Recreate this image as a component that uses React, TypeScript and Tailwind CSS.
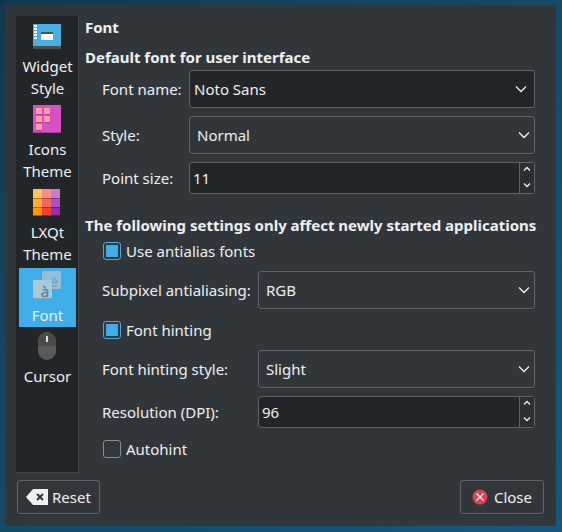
import { useState } from "react";
import type { ReactNode } from "react";

function WidgetIcon() {
  return (
    <svg className="h-8 w-[33px]" viewBox="0 0 33 32" shapeRendering="crispEdges" aria-hidden="true">
      <rect x="2" y="4" width="28" height="25" fill="#4d4d4d" />
      <rect x="2" y="4" width="28" height="22" fill="#47afe4" />
      {[5, 8, 11, 14, 17].map((y) => (
        <rect key={y} x="3" y={y} width="3" height="2" fill="#fff" />
      ))}
      <rect x="10" y="12" width="12" height="8" fill="#fff" />
      <rect x="10" y="12" width="12" height="2" fill="#4d4d4d" />
    </svg>
  );
}

function IconsIcon() {
  const cells = [[5, 5], [13, 5], [5, 13], [13, 13], [5, 21]];
  return (
    <svg className="h-8 w-[33px]" viewBox="0 0 33 32" shapeRendering="crispEdges" aria-hidden="true">
      <rect x="2" y="2" width="28" height="28" fill="#d94fc6" />
      <rect x="2" y="29" width="28" height="1" fill="#a53a96" />
      {cells.map(([x, y]) => (
        <g key={`${x}-${y}`}>
          <rect x={x} y={y + 6} width="6" height="1" fill="#a63c98" />
          <rect x={x} y={y} width="6" height="6" fill="#ff9ea2" />
        </g>
      ))}
    </svg>
  );
}

function LxqtIcon() {
  const rows = [
    ["#ffc168", "#fa8e86", "#c57bd0"],
    ["#ffac35", "#f7675d", "#b04fc0"],
    ["#ff9800", "#f44336", "#9c27b0"],
  ];
  return (
    <svg className="h-8 w-[33px]" viewBox="0 0 33 32" shapeRendering="crispEdges" aria-hidden="true">
      {rows.map((row, r) =>
        row.map((c, i) => <rect key={c} x={2 + i * 9} y={3 + r * 9} width="9" height="9" fill={c} />),
      )}
      <path d="M2 12.500h27M2 21.500h27" stroke="#000" strokeOpacity=".3" />
      <path d="M2 29.500h27" stroke="#000" strokeOpacity=".4" />
    </svg>
  );
}

function FontIcon() {
  return (
    <svg className="h-8 w-[33px] font-['Noto_Sans',sans-serif]" viewBox="0 0 33 32" aria-hidden="true">
      <rect x="11" y="2" width="19" height="19" rx="1" fill="#94bfd6" />
      <path d="M11 20.500h19" stroke="#7399ad" />
      <text x="23" y="18" fontSize="14" textAnchor="middle" fill="#6f9cb6">ë</text>
      <rect x="2" y="11" width="19" height="19" rx="1" fill="#a9cadc" />
      <path d="M2 29.500h19" stroke="#7ba1b6" />
      <text x="14" y="28" fontSize="15" textAnchor="middle" fill="#5f7f93" stroke="#5f7f93" strokeWidth=".3">à</text>
    </svg>
  );
}

function CursorIcon() {
  return (
    <svg className="h-8 w-[33px]" viewBox="0 0 33 32" aria-hidden="true">
      <rect x="7" y="2" width="18" height="28" rx="9" fill="#5a5a5a" />
      <path d="M7 16v-5a9 9 0 0 1 18 0v5z" fill="#4b4b4b" />
      <rect x="15" y="6" width="2" height="6" fill="#dedede" />
    </svg>
  );
}

const pages: { name: string; icon: ReactNode }[] = [
  { name: "Widget Style", icon: <WidgetIcon /> },
  { name: "Icons Theme", icon: <IconsIcon /> },
  { name: "LXQt Theme", icon: <LxqtIcon /> },
  { name: "Font", icon: <FontIcon /> },
  { name: "Cursor", icon: <CursorIcon /> },
];

function Chevron({ className }: { className: string }) {
  return (
    <svg className={`pointer-events-none absolute top-1/2 h-3 w-3 -translate-y-1/2 ${className}`} viewBox="0 0 12 12" fill="none" stroke="#eff0f1" aria-hidden="true">
      <path d="M1 3.500l5 5 5-5" strokeWidth="1.300" />
    </svg>
  );
}

function Combo({ id, label, options, editable = false }: { id: string; label: string; options: string[]; editable?: boolean }) {
  return (
    <>
      <label htmlFor={id} className="pb-px">{label}</label>
      <div className="relative">
        <select
          id={id}
          className={`block h-[38px] w-full appearance-none rounded-[3px] border border-[#616569] pr-8 outline-none ${
            editable ? "bg-[#232629] pl-1" : "bg-[#31363b] pl-[7px] shadow-[0_1px_0_#2a2e32]"
          }`}
        >
          {options.map((o) => (
            <option key={o}>{o}</option>
          ))}
        </select>
        <Chevron className={editable ? "right-2" : "right-[5px]"} />
      </div>
    </>
  );
}

function Spin({ id, label, initial }: { id: string; label: string; initial: number }) {
  const [value, setValue] = useState(initial);
  return (
    <>
      <label htmlFor={id}>{label}</label>
      <div className="flex h-8 rounded-[3px] border border-[#616569] bg-[#232629]">
        <input
          id={id}
          type="text"
          inputMode="numeric"
          className="min-w-0 flex-1 bg-transparent pl-[3px] outline-none"
          value={value}
          onChange={(e) => setValue(Number(e.target.value) || 0)}
        />
        <div className="flex w-[15px] flex-col border-l border-[#616569] bg-[#2b2f33]">
          <button type="button" aria-label={`Increase ${label}`} className="flex flex-1 items-start justify-center pt-0.5" onClick={() => setValue(value + 1)}>
            <svg className="h-2 w-2" viewBox="0 0 8 8" fill="none" stroke="#eff0f1" strokeWidth="1.300">
              <path d="M1 5.500l3-3 3 3" />
            </svg>
          </button>
          <button type="button" aria-label={`Decrease ${label}`} className="flex flex-1 items-end justify-center pb-1" onClick={() => setValue(value - 1)}>
            <svg className="h-2 w-2" viewBox="0 0 8 8" fill="none" stroke="#eff0f1" strokeWidth="1.300">
              <path d="M1 2.500l3 3 3-3" />
            </svg>
          </button>
        </div>
      </div>
    </>
  );
}

function Check({ label, checked = false }: { label: string; checked?: boolean }) {
  return (
    <label className="col-span-2 flex h-[25px] items-center gap-[5px] pl-px">
      <input
        type="checkbox"
        defaultChecked={checked}
        className="h-[18px] w-[18px] appearance-none rounded-[3px] border border-[#8a8d90] bg-clip-content p-[2px] checked:border-[#3daee9] checked:bg-[#3daee9]"
      />
      {label}
    </label>
  );
}

export default function App() {
  const [page, setPage] = useState("Font");
  return (
    <div className="min-h-screen bg-linear-to-br from-[#113a52] to-[#18587e] p-[5px] pr-1.5 pb-1.5 font-['Noto_Sans',sans-serif] text-[15px] leading-[22px] text-[#eff0f1]">
      <main className="bg-[#31363b] p-[11px] pb-3">
        <div className="flex gap-1.5">
          <nav className="flex w-[63px] shrink-0 flex-col gap-0.5 border-r border-b border-[#3f454b] bg-[#232629] py-[3px] pr-0.5 pl-[3px]">
            {pages.map((p) => (
              <button
                key={p.name}
                type="button"
                onClick={() => setPage(p.name)}
                className={`flex flex-col items-center gap-[3px] py-px ${page === p.name ? "bg-[#3daee9]" : ""}`}
              >
                {p.icon}
                <span>{p.name}</span>
              </button>
            ))}
          </nav>
          <div className="min-w-0 flex-1 pb-3">
            <h1 className="font-bold">Font</h1>
            <h2 className="mt-2 font-bold whitespace-nowrap">Default font for user interface</h2>
            <div className="mt-0.5 mr-2.5 ml-[17px] grid grid-cols-[87px_1fr] items-center gap-y-2">
              <Combo id="family" label="Font name:" options={["Noto Sans"]} editable />
              <Combo id="style" label="Style:" options={["Normal", "Bold", "Italic"]} />
              <Spin id="size" label="Point size:" initial={11} />
            </div>
            <h2 className="mt-5 font-bold whitespace-nowrap">The following settings only affect newly started applications</h2>
            <div className="mt-0.5 mr-2.5 ml-[17px] grid grid-cols-[156px_1fr] items-center gap-y-2">
              <Check label="Use antialias fonts" checked />
              <Combo id="subpixel" label="Subpixel antialiasing:" options={["RGB", "BGR", "None"]} />
              <Check label="Font hinting" checked />
              <Combo id="hinting" label="Font hinting style:" options={["Slight", "Medium", "Full"]} />
              <Spin id="dpi" label="Resolution (DPI):" initial={96} />
              <Check label="Autohint" />
            </div>
          </div>
        </div>
        <div className="mt-[7px] flex justify-between px-px">
          <button type="button" className="flex h-[34px] items-center gap-1 rounded-[3px] border border-[#616569] px-2 shadow-[0_1px_0_#2a2e32]">
            <svg className="h-4 w-[22px]" viewBox="0 0 22 16" aria-hidden="true">
              <path d="M0 8l7-8h15v16H7z" fill="#eff0f1" />
              <path d="M11 5l6 6m0-6l-6 6" stroke="#31363b" strokeWidth="2" />
            </svg>
            Reset
          </button>
          <button type="button" className="flex h-[34px] items-center gap-1.5 rounded-[3px] border border-[#616569] px-[11px] shadow-[0_1px_0_#2a2e32]">
            <svg className="h-4 w-4" viewBox="0 0 16 16" aria-hidden="true">
              <circle cx="8" cy="8" r="7.500" fill="#da4453" />
              <path d="M4.500 4.500l7 7m0-7l-7 7" stroke="#fff" strokeWidth="1.200" />
            </svg>
            Close
          </button>
        </div>
      </main>
    </div>
  );
}
